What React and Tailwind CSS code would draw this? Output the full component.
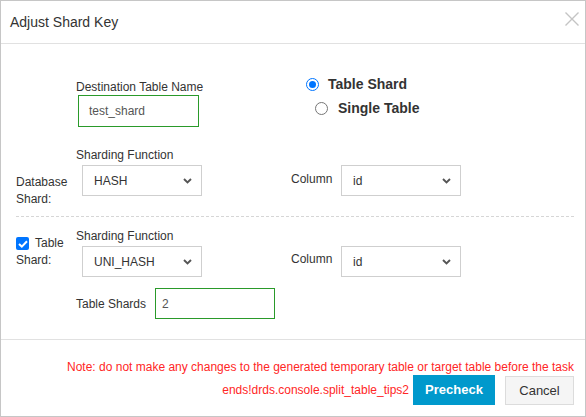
import { useState } from 'react';

const font = { fontFamily: '"Liberation Sans", Arial, sans-serif' };

function Chevron() {
  return (
    <svg width="9" height="6" viewBox="0 0 9 6" className="shrink-0">
      <path d="M1 1 L4.5 4.5 L8 1" fill="none" stroke="#555" strokeWidth="1.9" />
    </svg>
  );
}

function FakeSelect({ value }) {
  return (
    <div className="flex h-[31px] w-[120px] items-center justify-between border border-[#cfcfcf] bg-white pl-[11px] pr-[9px] text-[12px] text-[#333]">
      <span>{value}</span>
      <Chevron />
    </div>
  );
}

function Radio({ checked }) {
  return (
    <span
      className={`flex h-[13px] w-[13px] shrink-0 items-center justify-center rounded-full border ${
        checked ? 'border-[#0075ff]' : 'border-[#767676]'
      } bg-white`}
    >
      {checked && <span className="h-[7px] w-[7px] rounded-full bg-[#0075ff]" />}
    </span>
  );
}

export default function App() {
  const [mode, setMode] = useState('table');

  return (
    <div
      style={font}
      className="flex h-[417px] w-[586px] flex-col overflow-hidden border border-[#c6c6c6] bg-white text-[#333]"
    >
      {/* header */}
      <div className="flex h-[43px] shrink-0 items-center justify-between border-b border-[#e1e1e1] pl-[9px] pr-[4px]">
        <span className="text-[14px] text-[#333]">Adjust Shard Key</span>
        <svg width="16" height="16" viewBox="0 0 16 16" className="mb-[7px] mr-[1px]">
          <path d="M1.5 1.5 L14.5 14.5 M14.5 1.5 L1.5 14.5" stroke="#c4c4c4" strokeWidth="1.4" />
        </svg>
      </div>

      {/* body */}
      <div className="flex-1 pl-[15px] pr-[11px] text-[12px] leading-[16px]">
        <div className="mt-[35px] flex items-start">
          <div className="ml-[60px] w-[230px]">
            <div>Destination Table Name</div>
            <div className="ml-[2px] flex h-[32px] w-[121px] items-center border border-[#2a9a2a] pl-[10px] text-[12px] text-[#555]">
              test_shard
            </div>
          </div>
          <div className="-mt-[5px] flex flex-col gap-[4px] text-[14px] font-bold">
            <label className="flex h-[20px] items-center gap-[9px]" onClick={() => setMode('table')}>
              <Radio checked={mode === 'table'} />
              <span>Table Shard</span>
            </label>
            <label className="ml-[9px] flex h-[20px] items-center gap-[10px]" onClick={() => setMode('single')}>
              <Radio checked={mode === 'single'} />
              <span>Single Table</span>
            </label>
          </div>
        </div>

        {/* database shard */}
        <div className="mt-[20px] flex h-[49px] items-start">
          <div className="mt-[27px] w-[60px] leading-[17px]">Database Shard:</div>
          <div className="w-[215px]">
            <div>Sharding Function</div>
            <div className="ml-[6px] mt-[2px]">
              <FakeSelect value="HASH" />
            </div>
          </div>
          <div className="mt-[24px] w-[50px]">Column</div>
          <div className="mt-[18px]">
            <FakeSelect value="id" />
          </div>
        </div>

        <div className="mt-[20px] border-t border-dashed border-[#d6d6d6]" />

        {/* table shard */}
        <div className="mt-[11px] flex h-[49px] items-start">
          <div className="mt-[7px] w-[60px] leading-[17px]">
            <div className="flex items-center gap-[6px]">
              <span className="flex h-[13px] w-[13px] items-center justify-center rounded-[2px] bg-[#0075ff]">
                <svg width="10" height="8" viewBox="0 0 10 8">
                  <path d="M1 4 L3.8 6.6 L9 1.2" fill="none" stroke="#fff" strokeWidth="2" />
                </svg>
              </span>
              <span>Table</span>
            </div>
            <div>Shard:</div>
          </div>
          <div className="w-[215px]">
            <div>Sharding Function</div>
            <div className="ml-[6px] mt-[2px]">
              <FakeSelect value="UNI_HASH" />
            </div>
          </div>
          <div className="mt-[23px] w-[50px]">Column</div>
          <div className="mt-[18px]">
            <FakeSelect value="id" />
          </div>
        </div>

        <div className="ml-[60px] mt-[11px] flex items-center">
          <div className="w-[79px]">Table Shards</div>
          <div className="flex h-[31px] w-[120px] items-center border border-[#2a9a2a] pl-[6px] text-[#555]">2</div>
        </div>
      </div>

      {/* footer */}
      <div className="h-[77px] shrink-0 border-t border-[#e1e1e1] pr-[11px] pt-[19px] text-[12px] leading-[16px] text-[#ff2626]">
        <div className="text-right">
          Note: do not make any changes to the generated temporary table or target table before the task
        </div>
        <div className="flex items-center justify-end">
          <span className="mr-[4px]">ends!drds.console.split_table_tips2</span>
          <button className="h-[30px] w-[82px] bg-[#0099cc] text-[13px] font-bold text-white">Precheck</button>
          <button className="ml-[10px] mt-[1px] h-[29px] w-[69px] border border-[#dcdcdc] bg-[#f5f5f5] text-[13px] text-[#333]">
            Cancel
          </button>
        </div>
      </div>
    </div>
  );
}
